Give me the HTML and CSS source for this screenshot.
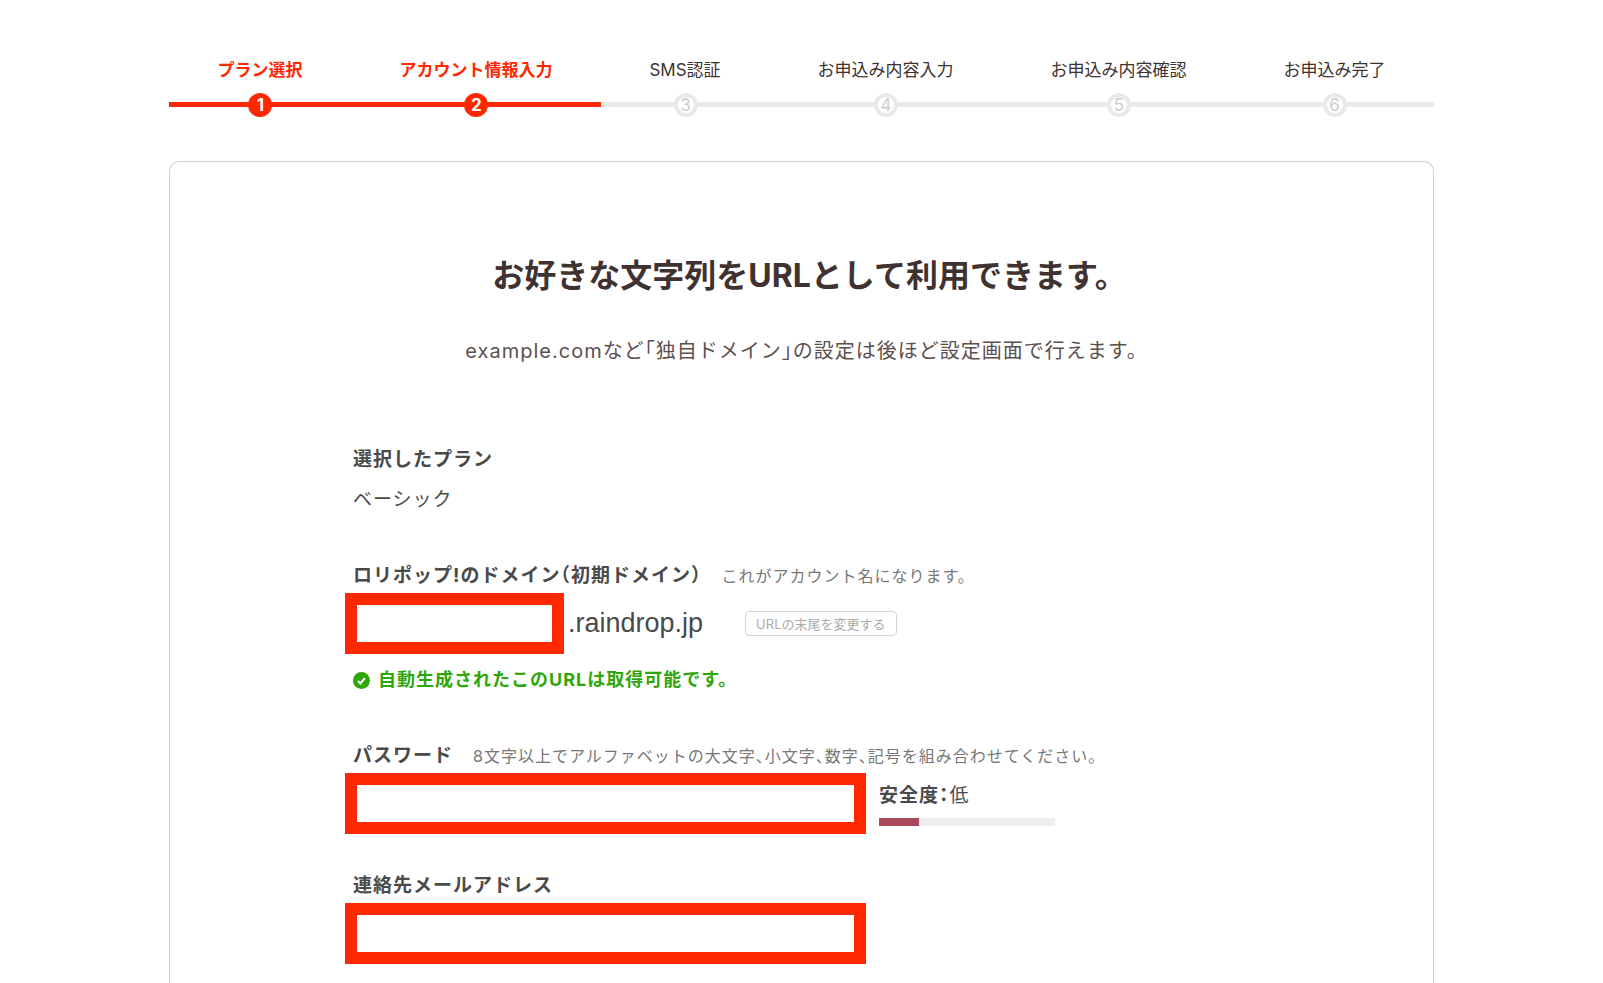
FILE: index.html
```html
<!DOCTYPE html>
<html lang="ja">
<head>
    <meta charset="UTF-8" />
    <meta name="viewport" content="width=device-width, initial-scale=1.0" />
    <title>アカウント情報入力 | ロリポップ!</title>
    <link rel="stylesheet" href="styles.css">
</head>
<body>
    <div class="container">
        <!-- 申込みステップ -->
        <ol class="steps">
            <li class="step done"><span class="step-name">プラン選択</span><span class="step-bar"><span class="step-num">1</span></span></li>
            <li class="step done"><span class="step-name">アカウント情報入力</span><span class="step-bar"><span class="step-num">2</span></span></li>
            <li class="step"><span class="step-name">SMS認証</span><span class="step-bar"><span class="step-num">3</span></span></li>
            <li class="step"><span class="step-name">お申込み内容入力</span><span class="step-bar"><span class="step-num">4</span></span></li>
            <li class="step"><span class="step-name">お申込み内容確認</span><span class="step-bar"><span class="step-num">5</span></span></li>
            <li class="step"><span class="step-name">お申込み完了</span><span class="step-bar"><span class="step-num">6</span></span></li>
        </ol>

        <main class="card">
            <h1>お好きな文字列をURLとして利用できます。</h1>
            <p class="lead">example.comなど「独自ドメイン」の設定は後ほど設定画面で行えます。</p>

            <form class="signup-form">
                <section class="field">
                    <h2 class="field-label">選択したプラン</h2>
                    <p class="plan-name">ベーシック</p>
                </section>

                <!-- 初期ドメイン -->
                <section class="field">
                    <div class="field-head">
                        <label class="field-label" for="account">ロリポップ!のドメイン（初期ドメイン）</label>
                        <span class="hint">これがアカウント名になります。</span>
                    </div>
                    <div class="field-row">
                        <input class="text-box short" id="account" type="text" />
                        <span class="domain">.raindrop.jp</span>
                        <button class="change-btn" type="button">URLの末尾を変更する</button>
                    </div>
                    <p class="available">
                        <svg class="check-icon" viewBox="0 0 17 17" aria-hidden="true">
                            <circle cx="8.5" cy="8.5" r="8.5" fill="#2fa60a" />
                            <path d="M5 9l2.4 2.4 4.4-5.2" fill="none" stroke="#fff" stroke-width="2" />
                        </svg>
                        自動生成されたこのURLは取得可能です。
                    </p>
                </section>

                <!-- パスワード -->
                <section class="field">
                    <div class="field-head">
                        <label class="field-label" for="password">パスワード</label>
                        <span class="hint">8文字以上でアルファベットの大文字、小文字、数字、記号を組み合わせてください。</span>
                    </div>
                    <div class="field-row">
                        <input class="text-box" id="password" type="password" />
                        <div class="strength">
                            <p class="strength-text"><b>安全度：</b>低</p>
                            <div class="strength-bar"><div class="strength-level"></div></div>
                        </div>
                    </div>
                </section>

                <section class="field">
                    <div class="field-head">
                        <label class="field-label" for="email">連絡先メールアドレス</label>
                    </div>
                    <div class="field-row">
                        <input class="text-box" id="email" type="email" />
                    </div>
                </section>
            </form>
        </main>
    </div>
</body>
</html>
```
FILE: styles.css
```css
*, *::before, *::after {
    box-sizing: border-box;
    margin: 0;
    padding: 0;
}

body {
    background: #fff;
    color: #403230;
    font-family: Inter, 'Noto Sans CJK JP', sans-serif;
    font-feature-settings: 'halt';
}

.container {
    display: flex;
    flex-direction: column;
    width: 79%;
    max-width: 1265px;
    min-height: 100vh;
    margin: 0 auto;
    padding-top: 58px;
}

/* ステップ表示 */
.steps {
    display: flex;
    list-style: none;
    margin-bottom: 44px;
}

.step {
    flex: 1 1 auto;
    text-align: center;
    font-size: 17px;
    line-height: 24px;
}

.step-name {
    display: block;
    margin-bottom: 11px;
}

/* 隣のバーと1px重ねて継ぎ目を消す */
.step-bar {
    display: flex;
    justify-content: center;
    align-items: center;
    height: 24px;
    margin-right: -1px;
    background: linear-gradient(#e9e9e9, #e9e9e9) 0 9px / 100% 5px no-repeat;
}

.step:last-child .step-bar {
    margin-right: 0;
}

.step-num {
    width: 24px;
    height: 24px;
    border: 4px solid #e9e9e9;
    border-radius: 50%;
    background: #fff;
    color: #ccc;
    font-size: 17px;
    line-height: 17px;
}

.step.done {
    color: #ff2800;
    font-weight: 700;
}

    .step.done .step-bar {
        background-image: linear-gradient(#ff2800, #ff2800);
    }

    .step.done .step-num {
        border-color: #ff2800;
        background: #ff2800;
        color: #fff;
    }

/* 入力カード */
.card {
    flex: 1;
    border: 1px solid #ccc;
    border-bottom: 0;
    border-radius: 10px 10px 0 0;
    padding: 90px 20px 0;
}

h1 {
    font-size: 32px;
    line-height: 48px;
    text-align: center;
}

.lead {
    margin-top: 36px;
    color: #5c504e;
    font-size: 20px;
    line-height: 30px;
    letter-spacing: 1px;
    text-align: center;
}

.signup-form {
    max-width: 897px;
    margin: 80px auto 0;
    color: #4a4a4a;
}

.field + .field {
    margin-top: 38px;
}

.field-head {
    display: flex;
    align-items: baseline;
    gap: 20px;
}

.field-label {
    font-size: 19px;
    font-weight: 700;
    line-height: 28px;
    letter-spacing: 1px;
}

.plan-name {
    margin: 12px 0 48px;
    font-size: 19px;
    line-height: 28px;
    letter-spacing: 1px;
}

.hint {
    color: #777;
    font-size: 16px;
    letter-spacing: 1px;
}

.field-row {
    display: flex;
    align-items: center;
    margin: 3px 0 0 -8px;
}

.text-box {
    width: 521px;
    height: 61px;
    border: 12px solid #ff2800;
    background: #fff;
    padding: 0 8px;
    font-size: 20px;
    outline: none;
}

    .text-box.short {
        width: 219px;
    }

.domain {
    margin-left: 4px;
    font-family: 'Liberation Sans', sans-serif;
    font-size: 27px;
}

.change-btn {
    height: 25px;
    margin-left: 42px;
    padding: 0 10px;
    border: 1px solid #d4d4d4;
    border-radius: 4px;
    background: #fff;
    color: #aaa;
    font-family: inherit;
    font-size: 13px;
    line-height: 20px;
    cursor: pointer;
}

.available {
    display: flex;
    align-items: center;
    gap: 8px;
    margin: 12px 0 48px;
    color: #2fa60a;
    font-size: 18px;
    font-weight: 700;
    line-height: 28px;
    letter-spacing: 1px;
}

/* 次の項目との余白は直前の段落側で取る */
.plan-name,
.available {
    margin-bottom: 48px;
}

.check-icon {
    width: 17px;
    height: 17px;
}

/* パスワードの安全度 */
.strength {
    width: 176px;
    margin-left: 13px;
}

.strength-text {
    font-size: 19px;
    line-height: 28px;
    letter-spacing: 1px;
}

.strength-bar {
    height: 8px;
    margin-top: 8px;
    background: #ededed;
}

.strength-level {
    width: 40px;
    height: 8px;
    background: #a94a5a;
}

@media (max-width: 768px) {
    .container {
        width: 94%;
    }

    .step-name {
        font-size: 12px;
    }

    .field-head,
    .field-row {
        flex-wrap: wrap;
        margin-left: 0;
    }

    .text-box {
        width: 100%;
    }
}
```
